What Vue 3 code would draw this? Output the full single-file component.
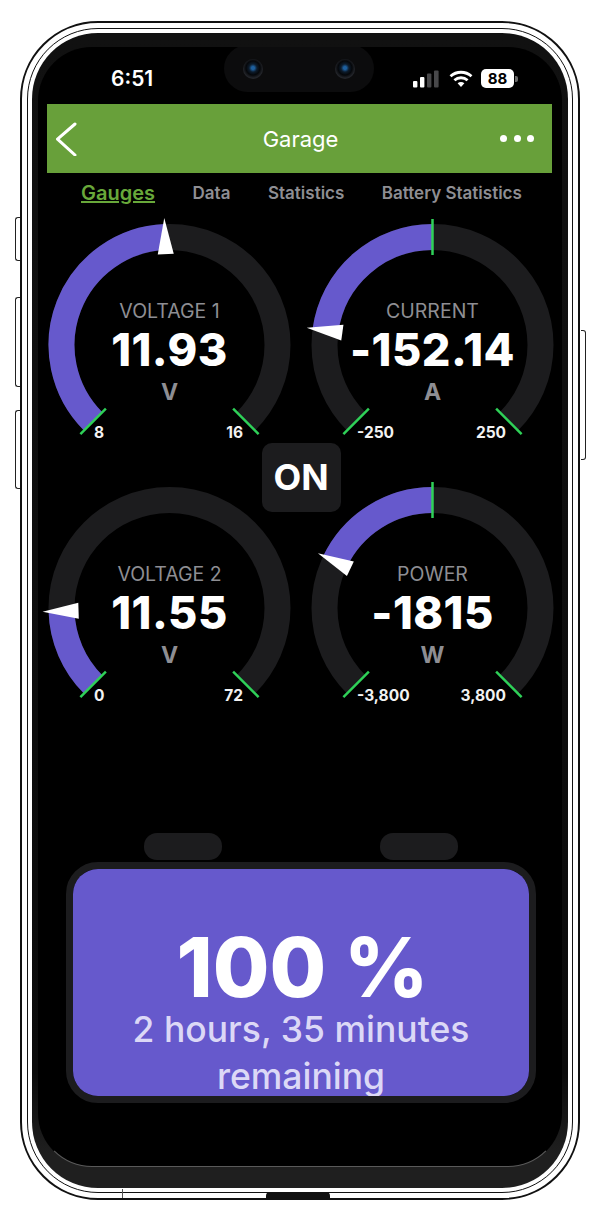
<script setup>
// gauge geometry, angles in degrees from top, clockwise
const CX = 122.5
const CY = 127
const R = 108
const SWEEP = 135

const gauges = [
  { label: 'VOLTAGE 1', value: 11.93, text: '11.93', unit: 'V', min: 8, max: 16, minText: '8', maxText: '16', centered: false },
  { label: 'CURRENT', value: -152.14, text: '-152.14', unit: 'A', min: -250, max: 250, minText: '-250', maxText: '250', centered: true },
  { label: 'VOLTAGE 2', value: 11.55, text: '11.55', unit: 'V', min: 0, max: 72, minText: '0', maxText: '72', centered: false },
  { label: 'POWER', value: -1815, text: '-1815', unit: 'W', min: -3800, max: 3800, minText: '-3,800', maxText: '3,800', centered: true }
]

const tabs = ['Gauges', 'Data', 'Statistics', 'Battery Statistics']

const polar = (deg, r) => {
  const a = (deg * Math.PI) / 180
  return [CX + r * Math.sin(a), CY - r * Math.cos(a)]
}

const arc = (from, to) => {
  const [x1, y1] = polar(from, R)
  const [x2, y2] = polar(to, R)
  const large = Math.abs(to - from) > 180 ? 1 : 0
  return `M${x1} ${y1}A${R} ${R} 0 ${large} 1 ${x2} ${y2}`
}

const angleOf = (g) => ((g.value - g.min) / (g.max - g.min)) * SWEEP * 2 - SWEEP

const fillPath = (g) => {
  const a = angleOf(g)
  // centre-zero gauges fill from the top, the others from the start
  if (g.centered) return a < 0 ? arc(a, 0) : arc(0, a)
  return arc(-SWEEP, a)
}

const tick = (deg) => {
  const [x1, y1] = polar(deg, 90)
  const [x2, y2] = polar(deg, 126)
  return { x1, y1, x2, y2 }
}

const pointer = (g) => {
  const a = angleOf(g)
  const tip = polar(a, 127)
  const [bx, by] = polar(a, 91)
  const rad = (a * Math.PI) / 180
  const dx = Math.cos(rad) * 8
  const dy = Math.sin(rad) * 8
  return `${tip[0]},${tip[1]} ${bx + dx},${by + dy} ${bx - dx},${by - dy}`
}
</script>

<template>
  <div class="phone">
    <span class="side-btn left b1"></span>
    <span class="side-btn left b2"></span>
    <span class="side-btn left b3"></span>
    <span class="side-btn right b4"></span>
    <span class="seam"></span>
    <span class="port"></span>

    <div class="rim">
      <div class="bezel">
        <div class="screen">
          <div class="island">
            <span class="lens"></span>
            <span class="lens"></span>
          </div>

          <div class="status">
            <span class="time">6:51</span>
            <div class="status-icons">
              <svg width="28" height="18" viewBox="0 0 28 18">
                <rect x="0" y="11" width="4.4" height="6.5" rx="1" fill="#fff" />
                <rect x="7" y="7" width="4.4" height="10.5" rx="1" fill="#fff" />
                <rect x="14" y="3.5" width="4.4" height="14" rx="1" fill="#48484a" />
                <rect x="21" y="0.5" width="4.6" height="17" rx="1" fill="#48484a" />
              </svg>
              <svg width="24" height="18" viewBox="0 0 24 18">
                <path d="M1.5 6.3C7.5 .9 16.5 .9 22.5 6.3" fill="none" stroke="#fff" stroke-width="2.8" />
                <path d="M5.4 10.2C9.2 6.9 14.8 6.9 18.6 10.2" fill="none" stroke="#fff" stroke-width="2.8" />
                <path d="M8.6 13.2C10.6 11.6 13.4 11.6 15.4 13.2L12 17Z" fill="#fff" />
              </svg>
              <div class="batt">
                <span class="batt-body">88</span>
                <span class="batt-tip"></span>
              </div>
            </div>
          </div>

          <div class="nav">
            <svg class="back" width="22" height="34" viewBox="0 0 22 34">
              <path d="M19 2L1.5 17.2L19 33" fill="none" stroke="#fff" stroke-width="3" stroke-linecap="round" stroke-linejoin="round" />
            </svg>
            <span class="nav-title">Garage</span>
            <div class="dots"><i></i><i></i><i></i></div>
          </div>

          <div class="tabs">
            <span v-for="(t, i) in tabs" :key="t" class="tab" :class="{ active: i === 0 }">{{ t }}</span>
          </div>

          <div class="gauges">
            <div v-for="g in gauges" :key="g.label" class="gauge">
              <svg class="dial" width="245" height="263" viewBox="0 0 245 263">
                <path :d="arc(-135, 135)" class="track" />
                <path :d="fillPath(g)" class="fill" />
                <line v-bind="tick(-135)" class="tick" />
                <line v-bind="tick(135)" class="tick" />
                <line v-if="g.centered" v-bind="tick(0)" class="tick" />
                <polygon :points="pointer(g)" fill="#fff" />
                <text x="47" y="220" class="limit">{{ g.minText }}</text>
                <text x="196" y="220" class="limit" text-anchor="end">{{ g.maxText }}</text>
              </svg>
              <div class="readout">
                <span class="g-label">{{ g.label }}</span>
                <span class="g-value">{{ g.text }}</span>
                <span class="g-unit">{{ g.unit }}</span>
              </div>
            </div>
            <div class="on-btn">ON</div>
          </div>

          <div class="battery">
            <div class="terminals"><span></span><span></span></div>
            <div class="cell">
              <div class="cell-fill">
                <div class="percent">100 %</div>
                <div class="remaining">2 hours, 35 minutes remaining</div>
              </div>
            </div>
          </div>
        </div>
      </div>
    </div>
  </div>
</template>

<style>
html, body { background: #fff; }
</style>

<style scoped>
.phone {
  position: relative;
  box-sizing: border-box;
  width: 560px;
  height: 1179px;
  margin: 21px 0 0 20px;
  border: 2px solid #111;
  border-radius: 78px;
  padding: 5px;
  background: #fff;
  font-family: Inter, "Liberation Sans", sans-serif;
}
.rim {
  box-sizing: border-box;
  height: 100%;
  border: 1px solid #111;
  border-radius: 71px;
  padding: 4px;
}
.bezel {
  box-sizing: border-box;
  height: 100%;
  border-radius: 66px;
  background: linear-gradient(#111 0, #0b0b0b 90%, #1f1f1f 97%);
  padding: 14px 6px 21px;
}
.screen {
  position: relative;
  box-sizing: border-box;
  height: 100%;
  background: #000;
  border-radius: 54px;
  border: 1px solid transparent;
  border-bottom-color: #5a5a5a;
  border-top: 0;
  overflow: hidden;
  display: flex;
  flex-direction: column;
  color: #fff;
}

.side-btn {
  position: absolute;
  width: 5px;
  box-sizing: border-box;
  border: 1.5px solid #222;
  background: #fff;
}
.side-btn.left { left: -7px; border-right: 0; border-radius: 3px 0 0 3px; }
.side-btn.right { right: -8px; border-left: 0; border-radius: 0 3px 3px 0; }
.b1 { top: 194px; height: 44px; }
.b2 { top: 274px; height: 90px; }
.b3 { top: 387px; height: 79px; }
.b4 { top: 307px; height: 130px; }
.seam {
  position: absolute;
  left: 100px;
  bottom: 0;
  width: 1px;
  height: 9px;
  background: #555;
}
.port {
  position: absolute;
  left: 244px;
  bottom: -1px;
  width: 64px;
  height: 7px;
  background: #111;
  border-radius: 4px 4px 0 0;
}

.island {
  position: absolute;
  top: -2px;
  left: 185px;
  width: 150px;
  height: 47px;
  background: #0c0c0d;
  border-radius: 24px;
  display: flex;
  justify-content: space-between;
  padding: 0 19px;
  box-sizing: border-box;
  align-items: center;
}
.lens {
  width: 20px;
  height: 20px;
  border-radius: 50%;
  background: radial-gradient(circle at 50% 45%, #1d5f9e 0 1.5px, #0d1c2c 4px, #05070a 7px, #23252a 10px);
}

.status {
  height: 57px;
  flex: none;
  display: flex;
  justify-content: space-between;
  align-items: center;
  padding: 6px 43px 0 72px;
  box-sizing: border-box;
}
.time { font-size: 21px; font-weight: 600; }
.status-icons { display: flex; align-items: center; gap: 8px; }
.batt { display: flex; align-items: center; gap: 1px; }
.batt-body {
  width: 33px;
  height: 19px;
  background: #fff;
  color: #000;
  border-radius: 5px;
  font-size: 15px;
  font-weight: 700;
  line-height: 19px;
  text-align: center;
}
.batt-tip { width: 3px; height: 6px; background: #6b6b6b; border-radius: 0 2px 2px 0; }

.nav {
  position: relative;
  flex: none;
  height: 69px;
  margin: 0 9px 0 8px;
  background: #68a03a;
  display: flex;
  align-items: center;
  justify-content: center;
}
.back { position: absolute; left: 9px; top: 18px; }
.nav-title { font-size: 22px; margin-left: 2px; }
.dots { position: absolute; right: 18px; top: 31px; display: flex; gap: 6.5px; }
.dots i { width: 7px; height: 7px; border-radius: 50%; background: #fff; }

.tabs {
  flex: none;
  height: 45px;
  display: flex;
  align-items: center;
  gap: 37.5px;
  padding: 0 0 5px 42px;
  box-sizing: border-box;
  font-size: 17px;
  font-weight: 600;
  color: #8e8e93;
}
.tab.active {
  color: #68a83a;
  font-size: 20px;
  text-decoration: underline;
}

.gauges {
  position: relative;
  flex: none;
  display: grid;
  grid-template-columns: 245px 245px;
  grid-auto-rows: 263px;
  column-gap: 18px;
  margin-left: 8px;
}
.gauge { position: relative; }
.dial { display: block; overflow: visible; }
.track { fill: none; stroke: #1c1c1e; stroke-width: 26; }
.fill { fill: none; stroke: #6659cc; stroke-width: 26; }
.tick { stroke: #2fd158; stroke-width: 2.5; }
.limit { fill: #f2f2f2; font-size: 15.5px; font-weight: 700; }

.readout {
  position: absolute;
  top: 81px;
  left: 0;
  right: 0;
  display: flex;
  flex-direction: column;
  align-items: center;
}
.g-label { font-size: 19.5px; line-height: 24px; color: #8e8e93; }
.g-value { margin-top: 9px; font-size: 45px; line-height: 36px; font-weight: 800; letter-spacing: 0.5px; }
.g-unit { margin-top: 14px; font-size: 23px; line-height: 20px; font-weight: 700; color: #8e8e93; }

.on-btn {
  position: absolute;
  left: 214.5px;
  top: 225px;
  width: 79px;
  height: 69px;
  border-radius: 10px;
  background: #1c1c1e;
  display: flex;
  align-items: center;
  justify-content: center;
  padding-bottom: 2px;
  box-sizing: border-box;
  font-size: 36px;
  font-weight: 700;
}

.battery {
  flex: none;
  margin: 89px 25px 0 27px;
}
.terminals {
  display: flex;
  justify-content: space-between;
  padding: 0 78px;
  height: 29px;
}
.terminals span {
  width: 78px;
  height: 27px;
  background: #1c1c1e;
  border-radius: 13px;
}
.cell {
  height: 241px;
  box-sizing: border-box;
  border: 7px solid #1c1c1e;
  border-radius: 32px;
}
.cell-fill {
  height: 100%;
  box-sizing: border-box;
  border-radius: 25px;
  background: #6659cc;
  overflow: hidden;
  padding: 60px 50px 0;
  text-align: center;
}
.percent { margin-left: 3px; font-size: 82px; line-height: 78px; font-weight: 800; }
.remaining {
  font-size: 35.5px;
  line-height: 46.5px;
  font-weight: 500;
  color: #dcd8f6;
}
</style>
